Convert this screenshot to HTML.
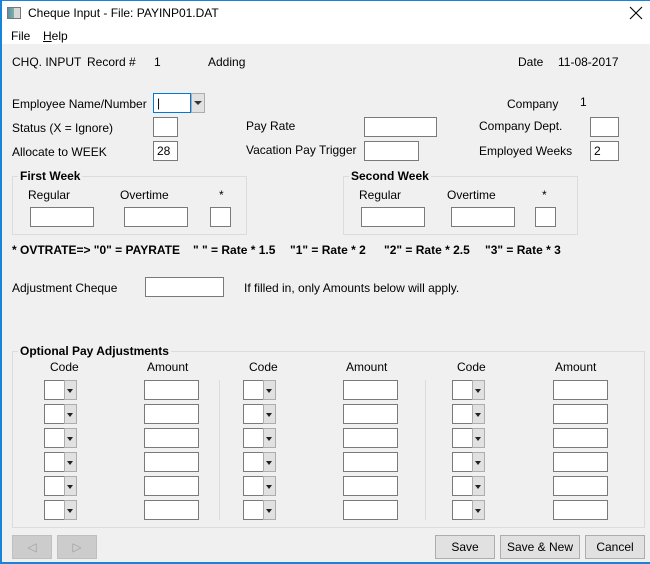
<!DOCTYPE html>
<html><head><style>
*{margin:0;padding:0;box-sizing:border-box}
body{width:650px;height:564px;overflow:hidden;background:#f0f0f0;font-family:"Liberation Sans",sans-serif;font-size:12px;color:#000;position:relative}
.a{position:absolute}
.t{position:absolute;line-height:14px;white-space:nowrap}
.b{font-weight:bold}
.in{position:absolute;background:#fff;border:1px solid #7a7a7a;height:20px;font-size:12px;line-height:18px;padding-left:3px}
.cb{position:absolute;width:33px;height:20px}
.cb i{position:absolute;left:0;top:0;width:21px;height:20px;background:#fff;border:1px solid #7a7a7a}
.cb s{position:absolute;left:20px;top:0;width:13px;height:20px;background:#e1e1e1;border:1px solid #adadad}
.cb s:after{content:"";position:absolute;left:2px;top:8px;border-left:3.5px solid transparent;border-right:3.5px solid transparent;border-top:4px solid #222}
.grp{position:absolute;border:1px solid #dcdcdc}
.lg{position:absolute;background:#f0f0f0;font-weight:bold;padding:0 2px;line-height:14px}
.btn{position:absolute;height:24px;background:#e1e1e1;border:1px solid #adadad;text-align:center;line-height:22px}
.sep{position:absolute;width:1px;background:#dcdcdc}
</style></head><body>
<div class="a" style="left:0;top:0;width:650px;height:44px;background:#fff"></div>
<div class="a" style="left:0;top:0;width:650px;height:1px;background:#1883d7"></div>
<div class="a" style="left:0;top:0;width:2px;height:564px;background:#1883d7"></div>
<div class="a" style="left:0;top:562px;width:650px;height:2px;background:#1883d7"></div>
<div class="a" style="left:7px;top:7px;width:14px;height:12px;border:1px solid #777;background:linear-gradient(90deg,#5a8fb0 0,#7fb3a0 50%,#d8d8d8 50%)"></div>
<div class="t" style="left:28px;top:6px">Cheque Input - File: PAYINP01.DAT</div>
<svg class="a" style="left:629px;top:6px" width="14" height="14" viewBox="0 0 14 14"><path d="M1 1L13 13M13 1L1 13" stroke="#000" stroke-width="1.1"/></svg>
<div class="t" style="left:11px;top:29px">File</div>
<div class="t" style="left:43px;top:29px"><u>H</u>elp</div>

<div class="t" style="left:12px;top:55px">CHQ. INPUT</div>
<div class="t" style="left:87px;top:55px">Record #</div>
<div class="t" style="left:154px;top:55px">1</div>
<div class="t" style="left:208px;top:55px">Adding</div>
<div class="t" style="left:518px;top:55px">Date</div>
<div class="t" style="left:558px;top:55px">11-08-2017</div>

<div class="t" style="left:12px;top:97px">Employee Name/Number</div>
<div class="in" style="left:153px;top:93px;width:38px;border-color:#0078d7">|</div>
<div class="a" style="left:191px;top:93px;width:14px;height:20px;background:#e1e1e1;border:1px solid #adadad"></div>
<div class="a" style="left:194px;top:101px;border-left:4px solid transparent;border-right:4px solid transparent;border-top:4px solid #333"></div>
<div class="t" style="left:12px;top:121px">Status (X = Ignore)</div>
<div class="in" style="left:153px;top:117px;width:25px"></div>
<div class="t" style="left:12px;top:145px">Allocate to WEEK</div>
<div class="in" style="left:153px;top:141px;width:25px">28</div>
<div class="t" style="left:246px;top:119px">Pay Rate</div>
<div class="in" style="left:364px;top:117px;width:73px"></div>
<div class="t" style="left:246px;top:143px">Vacation Pay Trigger</div>
<div class="in" style="left:364px;top:141px;width:55px"></div>
<div class="t" style="left:507px;top:97px">Company</div>
<div class="t" style="left:580px;top:95px">1</div>
<div class="t" style="left:479px;top:119px">Company Dept.</div>
<div class="in" style="left:590px;top:117px;width:29px"></div>
<div class="t" style="left:479px;top:144px">Employed Weeks</div>
<div class="in" style="left:590px;top:141px;width:29px">2</div>

<div class="grp" style="left:12px;top:176px;width:235px;height:59px"></div>
<div class="lg" style="left:18px;top:169px">First Week</div>
<div class="t" style="left:28px;top:188px">Regular</div>
<div class="t" style="left:120px;top:188px">Overtime</div>
<div class="t" style="left:219px;top:188px">*</div>
<div class="in" style="left:30px;top:207px;width:64px"></div>
<div class="in" style="left:124px;top:207px;width:64px"></div>
<div class="in" style="left:210px;top:207px;width:21px"></div>

<div class="grp" style="left:343px;top:176px;width:235px;height:59px"></div>
<div class="lg" style="left:349px;top:169px">Second Week</div>
<div class="t" style="left:359px;top:188px">Regular</div>
<div class="t" style="left:447px;top:188px">Overtime</div>
<div class="t" style="left:542px;top:188px">*</div>
<div class="in" style="left:361px;top:207px;width:64px"></div>
<div class="in" style="left:451px;top:207px;width:64px"></div>
<div class="in" style="left:535px;top:207px;width:21px"></div>

<div class="t b" style="left:12px;top:243px">* OVTRATE=&gt; "0" = PAYRATE</div>
<div class="t b" style="left:193px;top:243px">" " = Rate * 1.5</div>
<div class="t b" style="left:290px;top:243px">"1" = Rate * 2</div>
<div class="t b" style="left:384px;top:243px">"2" = Rate * 2.5</div>
<div class="t b" style="left:485px;top:243px">"3" = Rate * 3</div>

<div class="t" style="left:12px;top:281px">Adjustment Cheque</div>
<div class="in" style="left:145px;top:277px;width:79px"></div>
<div class="t" style="left:244px;top:281px">If filled in, only Amounts below will apply.</div>

<div class="grp" style="left:12px;top:351px;width:633px;height:177px"></div>
<div class="lg" style="left:18px;top:344px">Optional Pay Adjustments</div>
<div class="t" style="left:50px;top:360px">Code</div>
<div class="t" style="left:147px;top:360px">Amount</div>
<div class="t" style="left:249px;top:360px">Code</div>
<div class="t" style="left:346px;top:360px">Amount</div>
<div class="t" style="left:457px;top:360px">Code</div>
<div class="t" style="left:555px;top:360px">Amount</div>
<div class="sep" style="left:219px;top:380px;height:140px"></div>
<div class="sep" style="left:425px;top:380px;height:140px"></div>

<div class="cb" style="left:44px;top:380px"><i></i><s></s></div><div class="in" style="left:144px;top:380px;width:55px"></div>
<div class="cb" style="left:44px;top:404px"><i></i><s></s></div><div class="in" style="left:144px;top:404px;width:55px"></div>
<div class="cb" style="left:44px;top:428px"><i></i><s></s></div><div class="in" style="left:144px;top:428px;width:55px"></div>
<div class="cb" style="left:44px;top:452px"><i></i><s></s></div><div class="in" style="left:144px;top:452px;width:55px"></div>
<div class="cb" style="left:44px;top:476px"><i></i><s></s></div><div class="in" style="left:144px;top:476px;width:55px"></div>
<div class="cb" style="left:44px;top:500px"><i></i><s></s></div><div class="in" style="left:144px;top:500px;width:55px"></div>

<div class="cb" style="left:243px;top:380px"><i></i><s></s></div><div class="in" style="left:343px;top:380px;width:55px"></div>
<div class="cb" style="left:243px;top:404px"><i></i><s></s></div><div class="in" style="left:343px;top:404px;width:55px"></div>
<div class="cb" style="left:243px;top:428px"><i></i><s></s></div><div class="in" style="left:343px;top:428px;width:55px"></div>
<div class="cb" style="left:243px;top:452px"><i></i><s></s></div><div class="in" style="left:343px;top:452px;width:55px"></div>
<div class="cb" style="left:243px;top:476px"><i></i><s></s></div><div class="in" style="left:343px;top:476px;width:55px"></div>
<div class="cb" style="left:243px;top:500px"><i></i><s></s></div><div class="in" style="left:343px;top:500px;width:55px"></div>

<div class="cb" style="left:452px;top:380px"><i></i><s></s></div><div class="in" style="left:553px;top:380px;width:55px"></div>
<div class="cb" style="left:452px;top:404px"><i></i><s></s></div><div class="in" style="left:553px;top:404px;width:55px"></div>
<div class="cb" style="left:452px;top:428px"><i></i><s></s></div><div class="in" style="left:553px;top:428px;width:55px"></div>
<div class="cb" style="left:452px;top:452px"><i></i><s></s></div><div class="in" style="left:553px;top:452px;width:55px"></div>
<div class="cb" style="left:452px;top:476px"><i></i><s></s></div><div class="in" style="left:553px;top:476px;width:55px"></div>
<div class="cb" style="left:452px;top:500px"><i></i><s></s></div><div class="in" style="left:553px;top:500px;width:55px"></div>

<div class="btn" style="left:12px;top:535px;width:40px;background:#cccccc;border-color:#bfbfbf;color:#a0a0a0">◁</div>
<div class="btn" style="left:57px;top:535px;width:40px;background:#cccccc;border-color:#bfbfbf;color:#a0a0a0">▷</div>
<div class="btn" style="left:435px;top:535px;width:60px">Save</div>
<div class="btn" style="left:500px;top:535px;width:80px">Save &amp; New</div>
<div class="btn" style="left:585px;top:535px;width:60px">Cancel</div>
</body></html>
